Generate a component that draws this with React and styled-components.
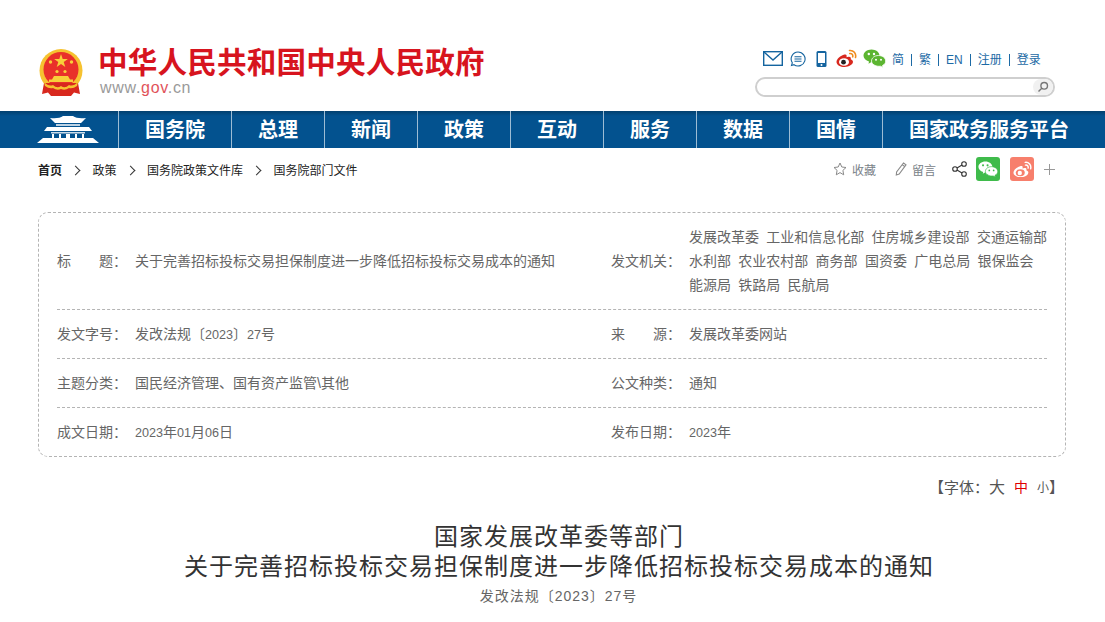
import React from "react";
import styled, { createGlobalStyle } from "styled-components";

const GlobalStyle = createGlobalStyle`
  html, body { margin: 0; padding: 0; background: #fff; overflow: hidden; }
  body { font-family: "Liberation Sans", "Noto Sans CJK SC", sans-serif; }
  #root { height: 622px; overflow: hidden; }
`;

const Header = styled.header`
  height: 111px;
  box-sizing: border-box;
  padding: 0 50px 0 39px;
  display: flex;
  justify-content: space-between;
`;

const Brand = styled.div`
  display: flex;
  gap: 15px;
  padding-top: 49px;
`;

const Wordmark = styled.div`
  display: flex;
  flex-direction: column;
`;

const SiteName = styled.div`
  font-size: 29.6px;
  line-height: 30px;
  font-weight: 700;
  letter-spacing: 0.15px;
  color: #d7141e;
  margin-top: -1px;
  white-space: nowrap;
`;

const SiteUrl = styled.div`
  font-size: 16px;
  line-height: 18px;
  margin: 1px 0 0 2px;
  color: #9a9a9a;
  letter-spacing: 0.7px;
  span { color: #d7141e; opacity: 0.75; }
`;

const Tools = styled.div`
  width: 300px;
  padding-top: 48px;
  display: flex;
  flex-direction: column;
  gap: 8px;
`;

const ToolRow = styled.div`
  display: flex;
  align-items: center;
  height: 21px;
  margin-left: 8px;
`;

const ToolIcon = styled.span`
  display: inline-flex;
  margin-right: ${(p) => p.$gap}px;
`;

const LangLink = styled.a`
  font-size: 12px;
  line-height: 21px;
  color: #1c6aa5;
  margin-top: 4px;
  &:not(:last-child)::after {
    content: "";
    display: inline-block;
    width: 1px;
    height: 12px;
    margin: 0 7px;
    vertical-align: -2px;
    background: #1c6aa5;
  }
`;

const SearchBox = styled.div`
  height: 20px;
  box-sizing: border-box;
  border: 2px solid #cfcfcf;
  border-radius: 10px;
  display: flex;
  justify-content: flex-end;
  align-items: center;
  overflow: hidden;
`;

const SearchButton = styled.span`
  width: 20px;
  height: 16px;
  border-radius: 8px;
  background: #f1f1f1;
  display: flex;
  align-items: center;
  justify-content: center;
`;

const Nav = styled.nav`
  height: 37px;
  background: linear-gradient(#03406f 0, #03528f 5px, #03528f 100%);
  display: flex;
  padding-left: 37px;
`;

const NavLogo = styled.div`
  width: 81px;
  display: flex;
  align-items: center;
`;

const NavItem = styled.a`
  width: ${(p) => p.$width}px;
  box-sizing: border-box;
  padding-right: ${(p) => p.$pad || 0}px;
  border-left: 1px solid #9dbcd4;
  color: #fff;
  font-size: 20px;
  font-weight: 700;
  line-height: 36px;
  text-align: center;
  white-space: nowrap;
  font-family: "Noto Sans CJK SC", sans-serif;
`;

const CrumbBar = styled.div`
  height: 64px;
  box-sizing: border-box;
  padding: 9px 50px 0 38px;
  display: flex;
  justify-content: space-between;
`;

const Crumbs = styled.div`
  display: flex;
  align-items: center;
  height: 24px;
  font-size: 12px;
  color: #222;
`;

const Crumb = styled.span`
  font-weight: ${(p) => (p.$strong ? 700 : 400)};
  &:not(:last-child)::after {
    content: "";
    display: inline-block;
    width: 6px;
    height: 6px;
    margin: 0 13.5px 1px 10px;
    border-top: 1px solid #333;
    border-right: 1px solid #333;
    transform: rotate(45deg);
  }
`;

const Actions = styled.div`
  display: flex;
  align-items: center;
  height: 24px;
`;

const ActionText = styled.span`
  display: flex;
  align-items: center;
  gap: 5px;
  font-size: 12px;
  color: #7a8288;
  margin-right: ${(p) => p.$gap}px;
`;

const ShareTile = styled.span`
  width: 24px;
  height: 24px;
  border-radius: 3px;
  background: ${(p) => p.$bg};
  margin-right: ${(p) => p.$gap}px;
  display: flex;
  align-items: center;
  justify-content: center;
`;

const Main = styled.main`
  margin: 0 39px 0 38px;
`;

const InfoBox = styled.section`
  border: 1px dashed #b4b4b4;
  border-radius: 10px;
  padding: 0 18px;
  display: flex;
  flex-direction: column;
`;

const InfoRow = styled.div`
  height: ${(p) => p.$height}px;
  box-sizing: border-box;
  padding-bottom: 2px;
  display: grid;
  grid-template-columns: 554px 1fr;
  align-items: center;
  &:not(:last-child) { border-bottom: 1px dashed #b4b4b4; }
`;

const InfoCell = styled.div`
  display: flex;
  align-items: center;
  font-size: 14px;
  color: #666;
  white-space: nowrap;
`;

const Label = styled.span`
  width: 78px;
  flex: none;
  display: flex;
  justify-content: space-between;
  padding-right: 8px;
  box-sizing: border-box;
`;

const Digits = styled.span`
  font-size: 12.6px;
`;

const Orgs = styled.div`
  line-height: 24px;
  margin-top: 2px;
`;

const OrgLine = styled.div`
  display: flex;
  gap: 7.3px;
`;

const FontSwitch = styled.div`
  margin-top: 19px;
  height: 20px;
  display: flex;
  justify-content: flex-end;
  align-items: center;
  font-size: 15px;
  color: #555;
  padding-right: 2px;
`;

const SizeOption = styled.span`
  font-size: ${(p) => p.$size}px;
  color: ${(p) => p.$color || "#555"};
  margin-left: ${(p) => p.$gap}px;
`;

const Title = styled.h1`
  margin: 26px 0 0;
  padding-left: 14px;
  text-align: center;
  font-size: 24px;
  line-height: 30px;
  font-weight: 400;
  letter-spacing: 1px;
  color: #333;
  font-family: "Liberation Serif", "Noto Sans CJK SC", serif;
`;

const DocNumber = styled.div`
  margin-top: 4px;
  padding-left: 13px;
  text-align: center;
  font-size: 14px;
  line-height: 20px;
  letter-spacing: 1px;
  color: #666;
`;

const Emblem = () => (
  <svg width="44" height="47" viewBox="0 0 44 47">
    <circle cx="22" cy="21.5" r="21.5" fill="#f6c230" />
    <circle cx="22" cy="20.5" r="17.5" fill="#e9302a" />
    <path d="M22 5 l1.7 5 h5.2 l-4.2 3.1 1.6 5 -4.3 -3 -4.3 3 1.6 -5 -4.2 -3.1 h5.2 Z" fill="#f8cf3a" />
    <circle cx="11.5" cy="13" r="1.7" fill="#f8cf3a" />
    <circle cx="32.5" cy="13" r="1.7" fill="#f8cf3a" />
    <circle cx="18" cy="22.5" r="1.6" fill="#f8cf3a" />
    <circle cx="26" cy="22.5" r="1.6" fill="#f8cf3a" />
    <path d="M15 27 h14 l2 3.5 h3 v2.5 H10 v-2.5 h3 Z" fill="#f8cf3a" />
    <path d="M5 34 h34 l2 11 -6 -1.5 -3 3.5 H12 l-3 -3.5 -6 1.5 Z" fill="#d8281e" />
    <path d="M5 33 q5 5 9 3 q4 4 8 1 q4 3 8 -1 q4 2 9 -3 l-1 4 q-4 3 -8 2 q-4 3 -8 1 q-4 2 -8 -1 q-4 1 -8 -2 Z" fill="#f6c230" />
  </svg>
);

const Palace = () => (
  <svg width="62" height="27" viewBox="0 0 62 27" fill="#fff">
    <path d="M13 2 q9 1 13 -2 h10 q4 3 13 2 l-5 5 H18 Z" />
    <path d="M19 8 h24 v2 H19 Z" opacity="0.75" />
    <path d="M10 11 h42 l3 4 H7 Z" />
    <path d="M14 16 h34 v1.5 H14 Z" opacity="0.8" />
    <path d="M15 18 h2 v4 h-2 Z M22 18 h2 v4 h-2 Z M29 18 h4 v4 h-4 Z M38 18 h2 v4 h-2 Z M45 18 h2 v4 h-2 Z" />
    <path d="M6 22 h50 l6 5 H0 Z" />
  </svg>
);

const Mail = () => (
  <svg width="20" height="15" viewBox="0 0 20 15" fill="none" stroke="#14649f" strokeWidth="1.4">
    <rect x="0.7" y="0.7" width="18.6" height="13.6" />
    <path d="M1 1 L10 9 L19 1" />
  </svg>
);

const Bubble = () => (
  <svg width="16" height="16" viewBox="0 0 16 16" fill="none" stroke="#14649f" strokeWidth="1.1">
    <path d="M8 1 a7 7 0 1 1 -4 12.7 L1.5 14.5 L2.3 11.8 A7 7 0 0 1 8 1 Z" />
    <path d="M4.5 5.8 h7 M4.5 8 h7 M4.5 10.2 h7" />
  </svg>
);

const Phone = () => (
  <svg width="11" height="16" viewBox="0 0 11 16">
    <rect x="0.5" y="0" width="10" height="16" rx="1.5" fill="#14649f" />
    <rect x="2" y="2" width="7" height="10" fill="#fff" />
    <circle cx="5.5" cy="14" r="1" fill="#fff" />
  </svg>
);

const Weibo = ({ body = "#d8281e", ring = "#fff", eye = "#222", arc = "#f08c1e", size = 21 }) => (
  <svg width={size} height={size * 0.86} viewBox="0 0 21 18" fill="none">
    <path d="M8.5 5.5 C4.5 6.5 0.5 10 0.5 13 C0.5 16 4.5 18 8.5 18 C13 18 17 15.5 17 12.8 C17 11 15 10.4 14.7 10.2 C15.3 8.6 14.5 7.6 12.5 7.8 L10.5 8.3 C11 6 10.4 5 8.5 5.5 Z" fill={body} />
    <ellipse cx="8" cy="13" rx="5" ry="3.8" fill={ring} />
    <circle cx="7.5" cy="13.2" r="2.4" fill={eye} />
    <path d="M13.5 1.5 C17.5 1 20.5 4.5 19.5 8.5 M13.8 4.5 C15.8 4.2 17.2 5.8 16.7 7.8" stroke={arc} strokeWidth="1.6" strokeLinecap="round" />
  </svg>
);

const Wechat = ({ big = "#5cb531", small = "#5cb531", dot = "#fff", edge = "#fff", width = 23 }) => (
  <svg width={width} height={width * 0.8} viewBox="0 0 23 18.4">
    <path d="M8.5 0.5 C13 0.5 16.5 3.3 16.5 6.8 C16.5 10.3 13 13 8.5 13 L5.5 14.8 L6 12.6 C2.8 11.6 0.5 9.4 0.5 6.8 C0.5 3.3 4 0.5 8.5 0.5 Z" fill={big} />
    <path d="M15.5 6.5 C19.5 6.5 22.7 9 22.7 12 C22.7 14 21.4 15.6 19.5 16.5 L20 18.4 L17.5 17.2 C13.5 17.8 8.5 15.6 8.5 12 C8.5 9 11.5 6.5 15.5 6.5 Z" fill={small} stroke={edge} strokeWidth="0.8" />
    <circle cx="5.8" cy="5" r="1.2" fill={dot} />
    <circle cx="11" cy="5" r="1.2" fill={dot} />
    <circle cx="13" cy="10.8" r="1" fill={dot} />
    <circle cx="18" cy="10.8" r="1" fill={dot} />
  </svg>
);

const Search = () => (
  <svg width="12" height="12" viewBox="0 0 12 12" fill="none" stroke="#777" strokeWidth="1.4">
    <circle cx="7.2" cy="4.8" r="3.3" />
    <path d="M4.8 7.2 L1.5 10.5" />
  </svg>
);

const Star = () => (
  <svg width="14" height="14" viewBox="0 0 14 14" fill="none" stroke="#8a8a8a" strokeWidth="1">
    <path d="M7 1 L8.8 5 L13 5.5 L9.9 8.4 L10.7 12.8 L7 10.6 L3.3 12.8 L4.1 8.4 L1 5.5 L5.2 5 Z" />
  </svg>
);

const Pencil = () => (
  <svg width="12" height="14" viewBox="0 0 12 14" fill="none" stroke="#8a8a8a" strokeWidth="1.1">
    <path d="M8.5 1 L11 2.8 L4.2 12 L1.3 13 L1.6 9.9 Z M7.3 2.8 L9.8 4.6" />
  </svg>
);

const Share = () => (
  <svg width="15" height="16" viewBox="0 0 15 16" fill="none" stroke="#333" strokeWidth="1.1">
    <circle cx="12" cy="3" r="2.3" />
    <circle cx="12" cy="13" r="2.3" />
    <circle cx="3" cy="8" r="2.3" />
    <path d="M5 6.9 L10 4.1 M5 9.1 L10 11.9" />
  </svg>
);

const Plus = () => (
  <svg width="11" height="11" viewBox="0 0 11 11" stroke="#999" strokeWidth="1">
    <path d="M5.5 0 V11 M0 5.5 H11" />
  </svg>
);

const navItems = [
  ["国务院", 113],
  ["总理", 93],
  ["新闻", 93],
  ["政策", 93],
  ["互动", 93],
  ["服务", 93],
  ["数据", 93],
  ["国情", 93],
  ["国家政务服务平台", 223, 10],
];

const orgLines = [
  ["发展改革委", "工业和信息化部", "住房城乡建设部", "交通运输部"],
  ["水利部", "农业农村部", "商务部", "国资委", "广电总局", "银保监会"],
  ["能源局", "铁路局", "民航局"],
];

const App = () => (
  <>
    <GlobalStyle />
    <Header>
      <Brand>
        <Emblem />
        <Wordmark>
          <SiteName>中华人民共和国中央人民政府</SiteName>
          <SiteUrl>www.<span>gov</span>.cn</SiteUrl>
        </Wordmark>
      </Brand>
      <Tools>
        <ToolRow>
          <ToolIcon $gap={7}><Mail /></ToolIcon>
          <ToolIcon $gap={10}><Bubble /></ToolIcon>
          <ToolIcon $gap={9}><Phone /></ToolIcon>
          <ToolIcon $gap={6}><Weibo /></ToolIcon>
          <ToolIcon $gap={6}><Wechat /></ToolIcon>
          <LangLink>简</LangLink>
          <LangLink>繁</LangLink>
          <LangLink>EN</LangLink>
          <LangLink>注册</LangLink>
          <LangLink>登录</LangLink>
        </ToolRow>
        <SearchBox>
          <SearchButton><Search /></SearchButton>
        </SearchBox>
      </Tools>
    </Header>
    <Nav>
      <NavLogo><Palace /></NavLogo>
      {navItems.map(([name, width, pad]) => (
        <NavItem key={name} $width={width} $pad={pad}>{name}</NavItem>
      ))}
    </Nav>
    <CrumbBar>
      <Crumbs>
        <Crumb $strong>首页</Crumb>
        <Crumb>政策</Crumb>
        <Crumb>国务院政策文件库</Crumb>
        <Crumb>国务院部门文件</Crumb>
      </Crumbs>
      <Actions>
        <ActionText $gap={19}><Star />收藏</ActionText>
        <ActionText $gap={16}><Pencil />留言</ActionText>
        <ToolIcon $gap={9}><Share /></ToolIcon>
        <ShareTile $bg="#3fbb4b" $gap={10}>
          <Wechat big="#fff" small="#fff" dot="#3fbb4b" edge="#3fbb4b" width={20} />
        </ShareTile>
        <ShareTile $bg="#f77f6c" $gap={10}>
          <Weibo body="#fff" ring="#f77f6c" eye="#fff" arc="#fff" size={19} />
        </ShareTile>
        <Plus />
      </Actions>
    </CrumbBar>
    <Main>
      <InfoBox>
        <InfoRow $height={97}>
          <InfoCell>
            <Label><span>标</span><span>题：</span></Label>
            <span>关于完善招标投标交易担保制度进一步降低招标投标交易成本的通知</span>
          </InfoCell>
          <InfoCell>
            <Label><span>发文机关：</span></Label>
            <Orgs>
              {orgLines.map((line) => (
                <OrgLine key={line[0]}>
                  {line.map((org) => <span key={org}>{org}</span>)}
                </OrgLine>
              ))}
            </Orgs>
          </InfoCell>
        </InfoRow>
        <InfoRow $height={49}>
          <InfoCell>
            <Label><span>发文字号：</span></Label>
            <span>发改法规〔<Digits>2023</Digits>〕<Digits>27</Digits>号</span>
          </InfoCell>
          <InfoCell>
            <Label><span>来</span><span>源：</span></Label>
            <span>发展改革委网站</span>
          </InfoCell>
        </InfoRow>
        <InfoRow $height={49}>
          <InfoCell>
            <Label><span>主题分类：</span></Label>
            <span>国民经济管理、国有资产监管\其他</span>
          </InfoCell>
          <InfoCell>
            <Label><span>公文种类：</span></Label>
            <span>通知</span>
          </InfoCell>
        </InfoRow>
        <InfoRow $height={48}>
          <InfoCell>
            <Label><span>成文日期：</span></Label>
            <span><Digits>2023</Digits>年<Digits>01</Digits>月<Digits>06</Digits>日</span>
          </InfoCell>
          <InfoCell>
            <Label><span>发布日期：</span></Label>
            <span><Digits>2023</Digits>年</span>
          </InfoCell>
        </InfoRow>
      </InfoBox>
      <FontSwitch>
        【字体：
        <SizeOption $size={16} $gap={0}>大</SizeOption>
        <SizeOption $size={14} $gap={9} $color="#e00000">中</SizeOption>
        <SizeOption $size={12} $gap={9}>小</SizeOption>
        】
      </FontSwitch>
      <Title>
        国家发展改革委等部门<br />
        关于完善招标投标交易担保制度进一步降低招标投标交易成本的通知
      </Title>
      <DocNumber>发改法规〔2023〕27号</DocNumber>
    </Main>
  </>
);

export default App;
